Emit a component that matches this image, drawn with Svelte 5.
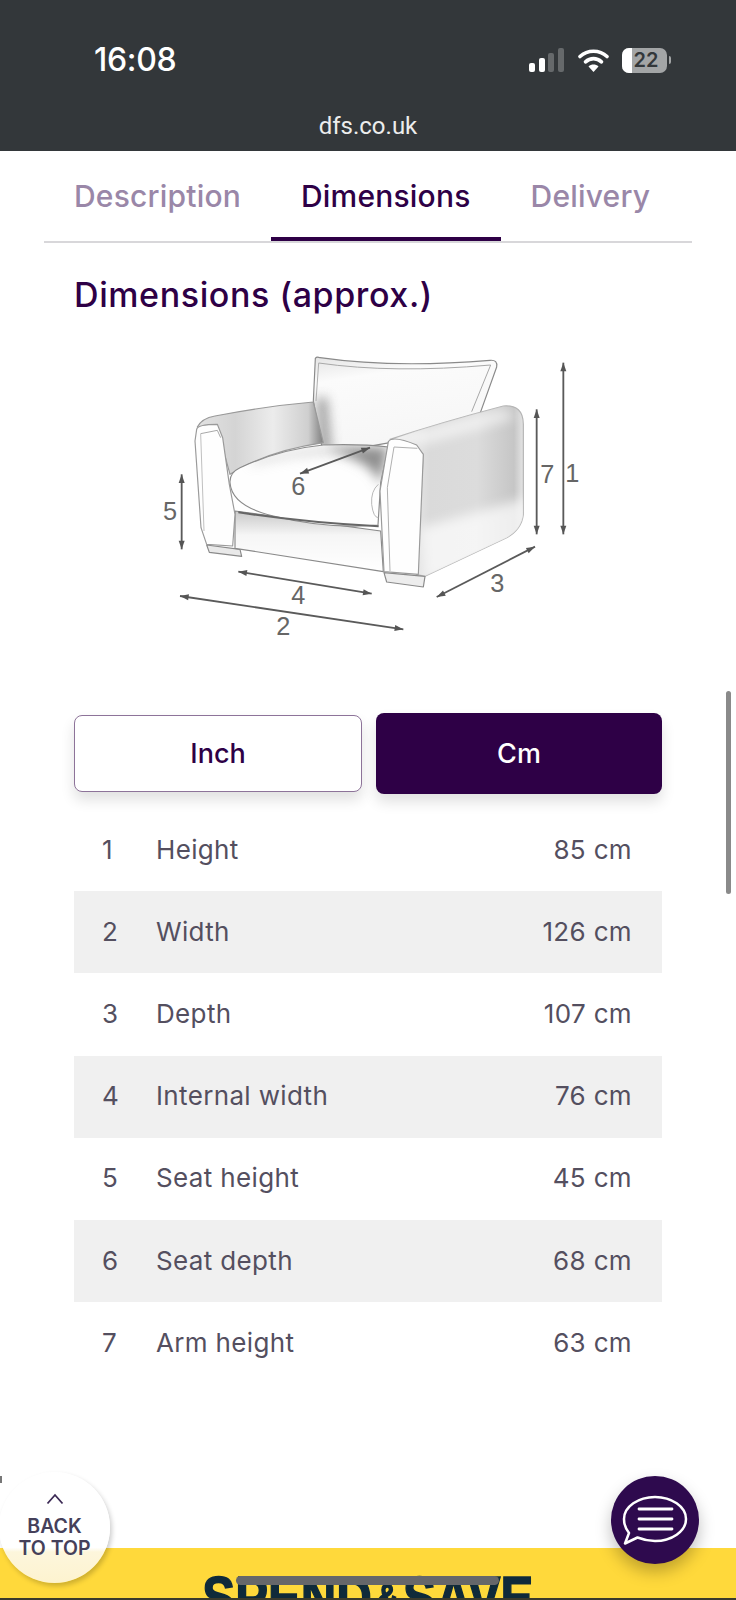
<script>
  const rows = [
    [1, 'Height', '85 cm'],
    [2, 'Width', '126 cm'],
    [3, 'Depth', '107 cm'],
    [4, 'Internal width', '76 cm'],
    [5, 'Seat height', '45 cm'],
    [6, 'Seat depth', '68 cm'],
    [7, 'Arm height', '63 cm']
  ];
  const arrows = [
    [1270, 65, 1270, 580],
    [1190, 205, 1190, 580],
    [125, 400, 125, 625],
    [890, 768, 1185, 617],
    [295, 692, 695, 758],
    [120, 765, 790, 865],
    [690, 320, 480, 398]
  ];
  const labels = [
    ['6', 475, 462], ['5', 90, 538], ['7', 1222, 426], ['1', 1297, 424],
    ['3', 1072, 752], ['4', 475, 790], ['2', 430, 882]
  ];
  function head(a) {
    const [x1, y1, x2, y2] = a;
    const l = Math.hypot(x2 - x1, y2 - y1);
    const ux = (x2 - x1) / l, uy = (y2 - y1) / l;
    const tri = (x, y, dx, dy) =>
      `${x},${y} ${x - dx * 26 - dy * 9},${y - dy * 26 + dx * 9} ${x - dx * 26 + dy * 9},${y - dy * 26 - dx * 9}`;
    return [tri(x2, y2, ux, uy), tri(x1, y1, -ux, -uy)];
  }
  const seatPath = 'M270 425Q268 395 300 380Q420 325 550 312Q660 308 745 318L722 425L714 552Q560 565 400 525Q275 495 270 425Z';
  const armPath = 'M172 258Q185 232 225 225Q380 195 520 183L550 305Q380 330 270 400L240 290Z';
  const backPath = 'M526 52Q530 46 540 50Q760 82 1050 58Q1074 56 1070 78L1005 260L550 340L520 180Z';
  const sidePath = 'M750 295Q900 245 1090 195Q1150 190 1150 250L1150 520Q1145 565 1100 590L855 706L830 700L850 340Z';
</script>

<div class="page">
  <header class="status">
    <div class="status-top">
      <span class="time">16:08</span>
      <div class="indicators">
        <svg class="signal" width="35" height="24" viewBox="0 0 35 24" aria-hidden="true">
          <rect x="0" y="15" width="6" height="9" rx="2" fill="#fff" />
          <rect x="10" y="10" width="6" height="14" rx="2" fill="#fff" />
          <rect x="19" y="5" width="6" height="19" rx="2" fill="#66696b" />
          <rect x="29" y="0" width="6" height="24" rx="2" fill="#66696b" />
        </svg>
        <svg class="wifi" width="31" height="24" viewBox="0 0 31 24" aria-hidden="true">
          <path d="M2 8.5C9.5 1.5 21.500 1.500 29 8.500" fill="none" stroke="#fff" stroke-width="3.600" stroke-linecap="round" />
          <path d="M7.500 13.800C12.200 9.600 18.800 9.600 23.500 13.800" fill="none" stroke="#fff" stroke-width="3.600" stroke-linecap="round" />
          <path d="M15.500 24L10.500 18.400C13.400 16 17.600 16 20.500 18.400Z" fill="#fff" />
        </svg>
        <div class="battery">
          <div class="battery-body"><span class="battery-fill"></span><span class="battery-num">22</span></div>
          <span class="battery-tip"></span>
        </div>
      </div>
    </div>
    <div class="url">dfs.co.uk</div>
  </header>

  <main class="main">
    <nav class="tabs">
      <span class="tab">Description</span>
      <span class="tab active">Dimensions</span>
      <span class="tab">Delivery</span>
    </nav>

    <section class="content">
      <h2>Dimensions (approx.)</h2>

      <svg class="chair" viewBox="0 0 1380 930" width="460" height="310" role="img" aria-label="Armchair dimensions diagram">
        <defs>
          <linearGradient id="armIn" x1="0" y1="0" x2="1" y2="0">
            <stop offset="0" stop-color="#e2e2e2" />
            <stop offset="0.3" stop-color="#d4d4d4" />
            <stop offset="0.6" stop-color="#ececec" />
            <stop offset="0.88" stop-color="#cfcfcf" />
            <stop offset="1" stop-color="#7e7e7e" />
          </linearGradient>
          <linearGradient id="back" x1="0" y1="0" x2="0.3" y2="1">
            <stop offset="0" stop-color="#e4e4e4" />
            <stop offset="0.25" stop-color="#fbfbfb" />
            <stop offset="1" stop-color="#f6f6f6" />
          </linearGradient>
          <linearGradient id="side" x1="0" y1="0" x2="1" y2="0">
            <stop offset="0" stop-color="#f6f6f6" />
            <stop offset="0.3" stop-color="#dadada" />
            <stop offset="0.65" stop-color="#dcdcdc" />
            <stop offset="0.93" stop-color="#c6c6c6" />
            <stop offset="1" stop-color="#e4e4e4" />
          </linearGradient>
          <linearGradient id="base" x1="0" y1="0" x2="0" y2="1">
            <stop offset="0" stop-color="#c8c8c8" />
            <stop offset="0.4" stop-color="#f6f6f6" />
            <stop offset="1" stop-color="#ffffff" />
          </linearGradient>
          <clipPath id="seatClip"><path d={seatPath} /></clipPath>
          <clipPath id="backClip"><path d={backPath} /></clipPath>
          <clipPath id="sideClip"><path d={sidePath} /></clipPath>
          <filter id="soft" filterUnits="userSpaceOnUse" x="0" y="0" width="1380" height="930"><feGaussianBlur stdDeviation="1.800" /></filter>
          <filter id="shade" filterUnits="userSpaceOnUse" x="0" y="0" width="1380" height="930"><feGaussianBlur stdDeviation="18" /></filter>
        </defs>

        <g filter="url(#soft)" stroke="#8a8a8a" stroke-width="3.500" stroke-linejoin="round">
          <path d={backPath} fill="url(#back)" />
          <g clip-path="url(#backClip)" stroke="none">
            <path d="M530 170L560 170L575 340L540 340Z" fill="#8f8f8f" filter="url(#shade)" opacity="0.900" />
          </g>
          <path d="M536 66Q760 98 1052 72L995 212" fill="none" stroke="#a8a8a8" stroke-width="3" />
          <path d="M536 66L528 180" fill="none" stroke="#b0b0b0" stroke-width="3" />
          <path d={armPath} fill="url(#armIn)" stroke="#9a9a9a" />
          <path d="M200 612L300 625L305 646L208 634Z" fill="#e9e9e9" />
          <path d="M285 510L722 570L730 692L285 622Z" fill="url(#base)" />
          <path d={seatPath} fill="#fefefe" />
          <g clip-path="url(#seatClip)" stroke="none">
            <path d="M560 318L745 318L722 430Q700 375 630 350Z" fill="#8e8e8e" filter="url(#shade)" />
            <path d="M330 360Q450 325 620 316L600 338Q450 340 340 372Z" fill="#b8b8b8" filter="url(#shade)" opacity="0.600" />
          </g>
          <path d="M295 514Q500 545 716 556" fill="none" stroke="#666" stroke-width="6" />
          <path d="M715 430Q692 450 695 490Q700 530 715 530" fill="none" stroke="#b8b8b8" stroke-width="3" />
          <path d="M170 265Q172 250 232 250L248 290L268 430L285 520L278 615L200 610L183 560L165 300Z" fill="#fefefe" stroke="#9a9a9a" />
          <path d="M182 278L232 268L242 290" fill="none" stroke="#a8a8a8" stroke-width="3" />
          <path d="M182 278L192 570" fill="none" stroke="#c0c0c0" stroke-width="3" />
          <path d={sidePath} fill="url(#side)" stroke="#b4b4b4" />
          <g clip-path="url(#sideClip)" stroke="none">
            <path d="M840 560L1160 470L1160 610L850 730Z" fill="#ffffff" filter="url(#shade)" opacity="0.700" />
            <path d="M770 290Q900 250 1090 205L1130 230L850 310Z" fill="#ffffff" filter="url(#shade)" opacity="0.600" />
          </g>
          <path d="M732 695L855 706L850 738L740 723Z" fill="#ededed" />
          <path d="M745 302Q758 282 830 312L850 340L835 700L732 692L720 450Z" fill="#fefefe" stroke="#9a9a9a" />
          <path d="M762 318L832 322M762 318L742 440L750 690" fill="none" stroke="#b0b0b0" stroke-width="3" />
        </g>

        <g filter="url(#soft)">
          {#each arrows as a}
            <line x1={a[0]} y1={a[1]} x2={a[2]} y2={a[3]} stroke="#5a5a5a" stroke-width="5.500" />
            {#each head(a) as p}
              <polygon points={p} fill="#555" />
            {/each}
          {/each}
        </g>
        {#each labels as l}
          <text class="dim" x={l[1]} y={l[2]} text-anchor="middle">{l[0]}</text>
        {/each}
      </svg>

      <div class="units">
        <button class="unit outline">Inch</button>
        <button class="unit solid">Cm</button>
      </div>

      <div class="table">
        {#each rows as r}
          <div class="row">
            <span class="num">{r[0]}</span>
            <span class="label">{r[1]}</span>
            <span class="val">{r[2]}</span>
          </div>
        {/each}
      </div>
    </section>
  </main>

  <footer class="banner">
    <div class="promo"><span>SPEND</span><small>&amp;</small><span>SAVE</span></div>
  </footer>

  <span class="scrollbar"></span>
  <span class="tick"></span>
  <span class="home"></span>

  <button class="backtop">
    <svg width="18" height="12" viewBox="0 0 18 12" aria-hidden="true"><path d="M1.500 10.500L9 2L16.500 10.500" fill="none" stroke="#3c2a55" stroke-width="1.800" /></svg>
    <span>BACK<br />TO TOP</span>
  </button>

  <button class="chat" aria-label="Chat">
    <svg width="66" height="52" viewBox="0 0 66 52" aria-hidden="true">
      <path d="M33 3C49.500 3 64 12.500 64 25S49.500 47 33 47C26 47 20.500 45.500 15.500 43.500L3 49.500L7 39C3.800 35 2 30.500 2 25C2 12.500 16.500 3 33 3Z" fill="none" stroke="#fff" stroke-width="2.500" stroke-linejoin="round" />
      <path d="M17 15H50M17 25H50M17 35H50" stroke="#fff" stroke-width="2.800" stroke-linecap="round" />
    </svg>
  </button>
</div>

<style>
  :global(body) { margin: 0; background: #fff; }
  .page {
    position: relative;
    width: 736px;
    height: 1600px;
    overflow: hidden;
    display: flex;
    flex-direction: column;
    font-family: Inter, "Open Sans", sans-serif;
    color: #2e0046;
  }
  .status {
    height: 151px;
    flex: none;
    background: #33373a;
    color: #fff;
    display: flex;
    flex-direction: column;
    box-sizing: border-box;
    padding: 44px 65px 0 94px;
  }
  .status-top { display: flex; justify-content: space-between; align-items: center; height: 32px; }
  .time { font-size: 32px; font-weight: 500; letter-spacing: -0.3px; line-height: 32px; }
  .indicators { display: flex; align-items: center; }
  .signal { margin-right: 14px; }
  .wifi { margin-right: 13px; }
  .battery { display: flex; align-items: center; }
  .battery-body {
    position: relative;
    width: 45px;
    height: 25px;
    border-radius: 7px;
    background: #a3a5a6;
    overflow: hidden;
    display: flex;
    align-items: center;
    justify-content: center;
  }
  .battery-fill { position: absolute; left: 0; top: 0; bottom: 0; width: 10px; background: #fff; }
  .battery-num { position: relative; font-size: 20px; font-weight: 600; color: #33373a; margin-left: 3px; }
  .battery-tip { width: 2px; height: 8px; background: #a3a5a6; border-radius: 0 2px 2px 0; margin-left: 2px; }
  .url { margin-top: 35px; margin-left: -94px; margin-right: -65px; text-align: center; font-size: 24px; line-height: 30px; color: #eceded; font-family: Roboto, sans-serif; }

  .main { flex: 1; min-height: 0; }
  .tabs {
    display: flex;
    margin: 0 44px;
    height: 92px;
    box-sizing: border-box;
    border-bottom: 2px solid #d8d7da;
  }
  .tab {
    padding: 0 30px;
    font-size: 30px;
    font-weight: 500;
    letter-spacing: 0.2px;
    line-height: 90px;
    color: #9a87a8;
    height: 90px;
    box-sizing: border-box;
  }
  .tab.active { color: #2e0046; border-bottom: 4px solid #2e0046; height: 90px; }

  .content { padding: 0 74px; }
  h2 { margin: 32px 0 0; font-size: 34px; font-weight: 500; letter-spacing: 0.6px; line-height: 40px; color: #2e0046; }
  .chair { display: block; margin: 26px 0 0 66px; }
  .dim { font-family: "Liberation Sans", sans-serif; font-size: 76px; fill: #666; }

  .units { display: flex; align-items: center; gap: 14px; margin-top: 62px; }
  .unit {
    flex: 1;
    font: inherit;
    font-size: 27px;
    font-weight: 500;
    border-radius: 8px;
    box-shadow: 0 8px 14px rgba(0, 0, 0, 0.12);
  }
  .outline { height: 77px; background: #fff; color: #2e0046; border: 1.500px solid #8d7399; }
  .solid { height: 81px; background: #2e0046; color: #fff; border: 0; }

  .table { margin-top: 15px; }
  .row {
    display: flex;
    align-items: center;
    height: 82.200px;
    padding: 0 30px 0 28px;
    font-size: 26px;
    letter-spacing: 0.35px;
    color: #544f5f;
  }
  .row span { margin-top: -2px; }
  .row:nth-child(even) { background: #f0f0f0; }
  .num { width: 54px; flex: none; }
  .label { flex: 1; }

  .banner {
    height: 52px;
    flex: none;
    box-sizing: border-box;
    background: #ffd93b;
    border-bottom: 2px solid #3a3a2c;
    overflow: hidden;
    display: flex;
    justify-content: center;
  }
  .promo {
    display: flex;
    align-items: center;
    margin-top: 22px;
    height: 56px;
    font-family: "Liberation Sans", sans-serif;
    font-weight: 700;
    font-size: 60px;
    line-height: 56px;
    color: #0f2a3a;
    transform: scaleX(0.82);
    -webkit-text-stroke: 1.500px #0f2a3a;
    white-space: nowrap;
  }
  .promo small { font-size: 36px; margin: 0 6px; }

  .scrollbar { position: absolute; left: 726px; top: 691px; width: 5px; height: 203px; border-radius: 3px; background: #8a8a8a; }
  .tick { position: absolute; left: 0; top: 1476px; width: 2px; height: 7px; background: #777; }
  .home { position: absolute; left: 236px; top: 1576px; width: 263px; height: 9px; border-radius: 5px; background: #66676a; }

  .backtop {
    position: absolute;
    left: -1px;
    top: 1472px;
    width: 111px;
    height: 111px;
    padding: 0;
    border: 0;
    border-radius: 50%;
    background: linear-gradient(#fff 0 68%, #fdf6dc 72%, #fdf3cf);
    box-shadow: 2px 3px 5px rgba(0, 0, 0, 0.2);
    display: flex;
    flex-direction: column;
    align-items: center;
    font-family: inherit;
    font-size: 19.500px;
    font-weight: 600;
    line-height: 22px;
    color: #45405a;
    box-sizing: border-box;
    padding-top: 21px;
  }
  .backtop span { margin-top: 10px; display: block; text-align: center; }
  .chat {
    position: absolute;
    left: 611px;
    top: 1476px;
    width: 88px;
    height: 88px;
    padding: 0;
    border: 0;
    border-radius: 50%;
    background: #2e0a4e;
    box-shadow: 0 8px 16px rgba(0, 0, 0, 0.25);
    display: flex;
    align-items: center;
    justify-content: center;
  }
</style>
